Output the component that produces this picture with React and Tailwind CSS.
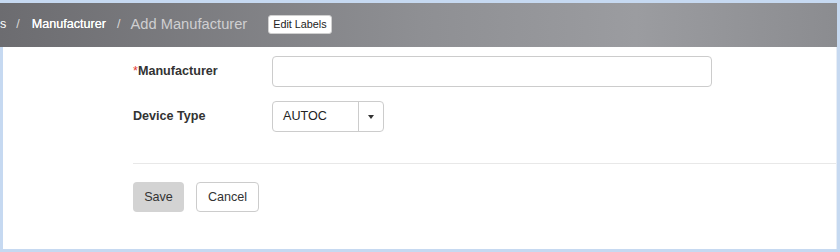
export default function App() {
  return (
    <div
      className="w-[840px] h-[252px] bg-[#c6d9f1] pt-[3px] pr-[3px] pb-[3px] flex flex-col overflow-hidden"
      style={{ fontFamily: '"Liberation Sans", Arial, sans-serif' }}
    >
      <div className="h-[44px] shrink-0 flex items-center pb-[1px] bg-[linear-gradient(to_right,#6c6c70_0%,#8e8f93_50%,#9b9ca0_76%,#8b8c90_100%)] whitespace-nowrap">
        <span className="text-[12.6px] text-white">s</span>
        <span className="text-[12.6px] text-[#d8d8d8] ml-[10px]">/</span>
        <span className="text-[12.6px] text-white ml-[12px] [text-shadow:0_0_0.4px_#fff]">Manufacturer</span>
        <span className="text-[12.6px] text-[#d8d8d8] ml-[11px]">/</span>
        <span className="text-[14.7px] text-[#cfcfd1] ml-[10px]">Add Manufacturer</span>
        <button className="ml-[21px] h-[19px] px-[4px] bg-white rounded-[3px] border border-[#d0d0d0] text-[10.8px] text-[#222] leading-none">
          Edit Labels
        </button>
      </div>
      <div className="flex-1 ml-[3px] bg-white border-r border-[#e8eef6] pl-[130px]">
        <div className="flex items-center mt-[9px] h-[31px]">
          <label className="w-[139px] text-[12.6px] font-bold text-[#333]">
            <span className="text-[#e53935] font-normal">*</span>Manufacturer
          </label>
          <input
            type="text"
            className="w-[440px] h-[31px] border border-[#cccccc] rounded-[4px] bg-white"
          />
        </div>
        <div className="flex items-center mt-[14px] h-[31px]">
          <label className="w-[139px] text-[12.6px] font-bold text-[#333]">Device Type</label>
          <div className="w-[112px] h-[31px] border border-[#cccccc] rounded-[4px] flex items-stretch bg-white">
            <div className="w-[86px] flex items-center pl-[10px] text-[12.6px] text-[#222] border-r border-[#cccccc]">
              AUTOC
            </div>
            <div className="flex-1 flex items-center justify-center">
              <svg width="6" height="4" viewBox="0 0 6 4">
                <path d="M0 0 L6 0 L3 4 Z" fill="#333" />
              </svg>
            </div>
          </div>
        </div>
        <div className="mt-[31px] h-px bg-[#e8e8e8]" />
        <div className="flex gap-[12px] mt-[18px]">
          <button className="w-[51px] h-[30px] bg-[#d3d3d3] rounded-[4px] text-[12.6px] text-[#333]">
            Save
          </button>
          <button className="w-[63px] h-[30px] bg-white border border-[#cccccc] rounded-[4px] text-[12.6px] text-[#333]">
            Cancel
          </button>
        </div>
      </div>
    </div>
  );
}
